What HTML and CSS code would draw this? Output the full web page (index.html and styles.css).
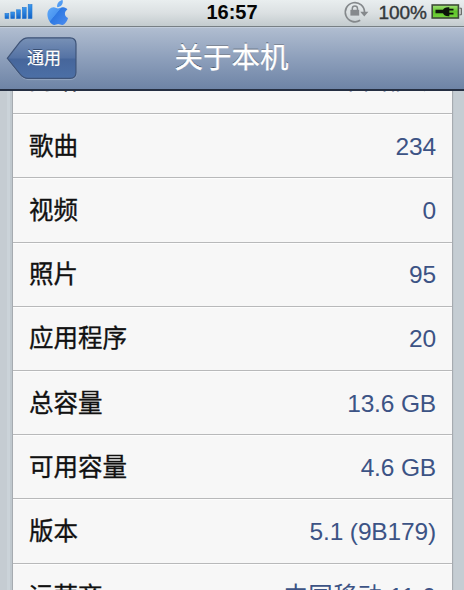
FILE: index.html
```html
<!DOCTYPE html>
<html lang="zh-CN">
<head>
<meta charset="utf-8">
<title>关于本机</title>
<link rel="stylesheet" href="styles.css">
</head>
<body>
<div class="screen">
  <header class="status">
    <div class="status-left">
      <svg class="signal" width="30" height="18" viewBox="0 0 30 18">
        <defs><linearGradient id="blue" x1="0" y1="0" x2="0" y2="1"><stop offset="0" stop-color="#3a98ee"/><stop offset="1" stop-color="#1260c4"/></linearGradient></defs>
        <g fill="url(#blue)" stroke="#2378d2" stroke-width=".6">
          <rect x="1" y="10.4" width="3.8" height="5.2"/><rect x="6.8" y="9" width="3.8" height="6.6"/><rect x="12.6" y="6.8" width="3.8" height="8.8"/><rect x="18.4" y="4.5" width="3.8" height="11.1"/><rect x="24.2" y="1.6" width="3.8" height="14"/>
        </g>
      </svg>
      <svg class="apple" width="22" height="26" viewBox="0 0 22 26">
        <defs><linearGradient id="fruit" x1="0" y1="0" x2="1" y2="1"><stop offset="0" stop-color="#69b2fb"/><stop offset=".48" stop-color="#4b96f1"/><stop offset=".5" stop-color="#2e78e2"/><stop offset="1" stop-color="#4c8df0"/></linearGradient></defs>
        <path fill="url(#fruit)" d="M11 8.5C12.4 8.5 13.8 7 16.2 7.2C18 7.3 19.5 8.1 20.4 9.4C16.8 11.8 17.2 16.2 21 18C20.2 21.2 17.8 24.8 15.4 24.9C13.8 25 13 24.1 11.2 24.1C9.4 24.1 8.5 25 7 24.9C3.7 24.7 .4 19.3 .4 14.6C.4 10 3.4 7.4 6.5 7.2C8.3 7.1 9.9 8.5 11 8.5ZM10.2 7.3C9.6 3.7 12 .6 15.6 0C16.6 3.8 14 7.1 10.2 7.3Z"/>
      </svg>
    </div>
    <div class="clock">16:57</div>
    <div class="status-right">
      <svg class="lock" width="26" height="24" viewBox="0 0 26 24" fill="none" stroke="#85898c" stroke-width="1.7">
        <path d="M17.2 20.2A9.6 9.6 0 1 1 21.5 12.5"/>
        <path fill="#85898c" stroke="none" d="M17.2 11.7H25.4L21.3 16.6Z"/>
        <rect x="7.4" y="9.8" width="8.8" height="5.8" fill="#85898c" stroke="none"/>
        <path d="M9.3 11V8.6A2.6 2.6 0 0 1 14.5 8.6V11" stroke-width="1.5"/>
      </svg>
      <span class="percent">100%</span>
      <svg class="battery" width="33" height="16" viewBox="0 0 33 16">
        <defs><linearGradient id="charge" x1="0" y1="0" x2="0" y2="1"><stop offset="0" stop-color="#a5e37a"/><stop offset=".5" stop-color="#5fc32b"/><stop offset="1" stop-color="#74d53c"/></linearGradient></defs>
        <rect x="1.2" y="1" width="26.2" height="13" fill="url(#charge)" stroke="#3d4b38" stroke-width="1.6"/>
        <path d="M28.4 4.2H30.4V10.8H28.4" fill="#c3c7c4" stroke="#5e625f"/>
        <path fill="#0c140a" d="M4.5 5.8H12C13 3.8 14.5 3 18.3 3.2V4.7H22.5V6.6H18.3V8.7H22.5V10.6H18.3V12.2C14.5 12.4 13 11.2 12 9.2H4.5Z"/>
      </svg>
    </div>
  </header>
  <nav class="navbar">
    <div class="back">
      <svg class="back-shape" width="72" height="46" viewBox="0 0 72 46">
        <defs><linearGradient id="button" x1="0" y1="0" x2="0" y2="1"><stop offset="0" stop-color="#7891b6"/><stop offset=".5" stop-color="#5472a4"/><stop offset=".52" stop-color="#46669b"/><stop offset="1" stop-color="#4c6fa6"/></linearGradient></defs>
        <path d="M1.3 23.3L14 7Q17.5 2.8 22 2.8H64Q70.3 2.8 70.3 9V37.5Q70.3 43.6 64 43.6H22Q17.5 43.6 14 39.2Z" fill="none" stroke="#a0b1ca" stroke-opacity=".65"/>
        <path d="M1.3 22.3L14 6Q17.5 1.8 22 1.8H64Q70 1.8 70 8V36.5Q70 42.4 64 42.4H22Q17.5 42.4 14 38.2Z" fill="url(#button)" stroke="#3e5377" stroke-width="1.2"/>
      </svg>
      <span class="back-label">通用</span>
    </div>
    <h1 class="title">关于本机</h1>
  </nav>
  <main class="content">
    <dl class="list">
      <div class="row network"><dt>网络</dt><dd>中国移动</dd></div>
      <div class="row"><dt>歌曲</dt><dd>234</dd></div>
      <div class="row"><dt>视频</dt><dd>0</dd></div>
      <div class="row"><dt>照片</dt><dd>95</dd></div>
      <div class="row"><dt>应用程序</dt><dd>20</dd></div>
      <div class="row"><dt>总容量</dt><dd>13.6 GB</dd></div>
      <div class="row"><dt>可用容量</dt><dd>4.6 GB</dd></div>
      <div class="row"><dt>版本</dt><dd>5.1 (9B179)</dd></div>
      <div class="row carrier"><dt>运营商</dt><dd>中国移动 11.0</dd></div>
    </dl>
  </main>
</div>
</body>
</html>
```
FILE: styles.css
```css
* { box-sizing: border-box; }
body { margin: 0; font-family: "Liberation Sans", "Noto Sans CJK SC", sans-serif; }
.screen { display: flex; flex-direction: column; width: 464px; height: 590px; overflow: hidden; }
.status {
  display: grid; grid-template-columns: 1fr auto 1fr; flex: none;
  height: 27px; border-bottom: 1px solid #777f84;
  background: linear-gradient(#e9eeef, #dbe0e2 50%, #c3cbce);
}
.status-left { display: flex; padding-left: 4px; }
.signal { margin-top: 3px; }
.apple { margin-left: 13px; }
.clock { font-size: 20px; font-weight: 700; line-height: 25px; color: #050505; }
.status-right { display: flex; justify-content: flex-end; }
.percent { margin: 0 4px 0 9px; font-size: 19px; line-height: 25px; color: #33373a; -webkit-text-stroke: .4px #33373a; }
.battery { margin-top: 4px; }
.navbar {
  display: grid; grid-template-columns: 1fr auto 1fr; flex: none; align-items: center;
  height: 64px; border-top: 1px solid #c2cddc; border-bottom: 2px solid #252f42;
  background: linear-gradient(#b0bdd0, #8d9fbb 50%, #6e84a6);
}
.back { display: grid; width: 72px; height: 46px; margin-left: 6px; }
.back-shape, .back-label { grid-area: 1 / 1; }
.back-label { align-self: center; padding-left: 21px; font-size: 17px; line-height: 24px; color: #fff; text-shadow: 0 -1px 0 #364c70; -webkit-text-stroke: .2px #fff; }
.title { margin: 0; padding: 0 1px 2px 0; font-size: 28.5px; font-weight: 400; line-height: 40px; color: #fff; text-shadow: 0 -1px 0 #465369; -webkit-text-stroke: .3px #fff; }
.content {
  flex: 1; min-height: 0; overflow: hidden; padding: 0 11px 0 12px;
  background: linear-gradient(90deg, #c5ccd2 0 7px, #cbd3d9 7px 10px, #c0c8ce 10px 454px, #c5cdd3 454px);
}
.list { margin: -41px 0 0; background: #f7f7f7; border: solid #a6abb0; border-width: 0 1px; }
.row {
  display: flex; justify-content: space-between; align-items: center;
  height: 64.2px; padding: 2px 16px 0 16px; border-bottom: 1px solid #b8b9ba; box-shadow: inset 0 1px #fdfdfd;
}
dt { font-size: 24.5px; line-height: 36px; color: #111; -webkit-text-stroke: .35px #111; }
dd { margin: 0; font-size: 24.5px; letter-spacing: -.15px; line-height: 36px; color: #3c5385; }
.network { padding-top: 0; padding-bottom: 1px; }
.carrier { padding-top: 4px; }
.carrier dd { letter-spacing: .2px; }
```
